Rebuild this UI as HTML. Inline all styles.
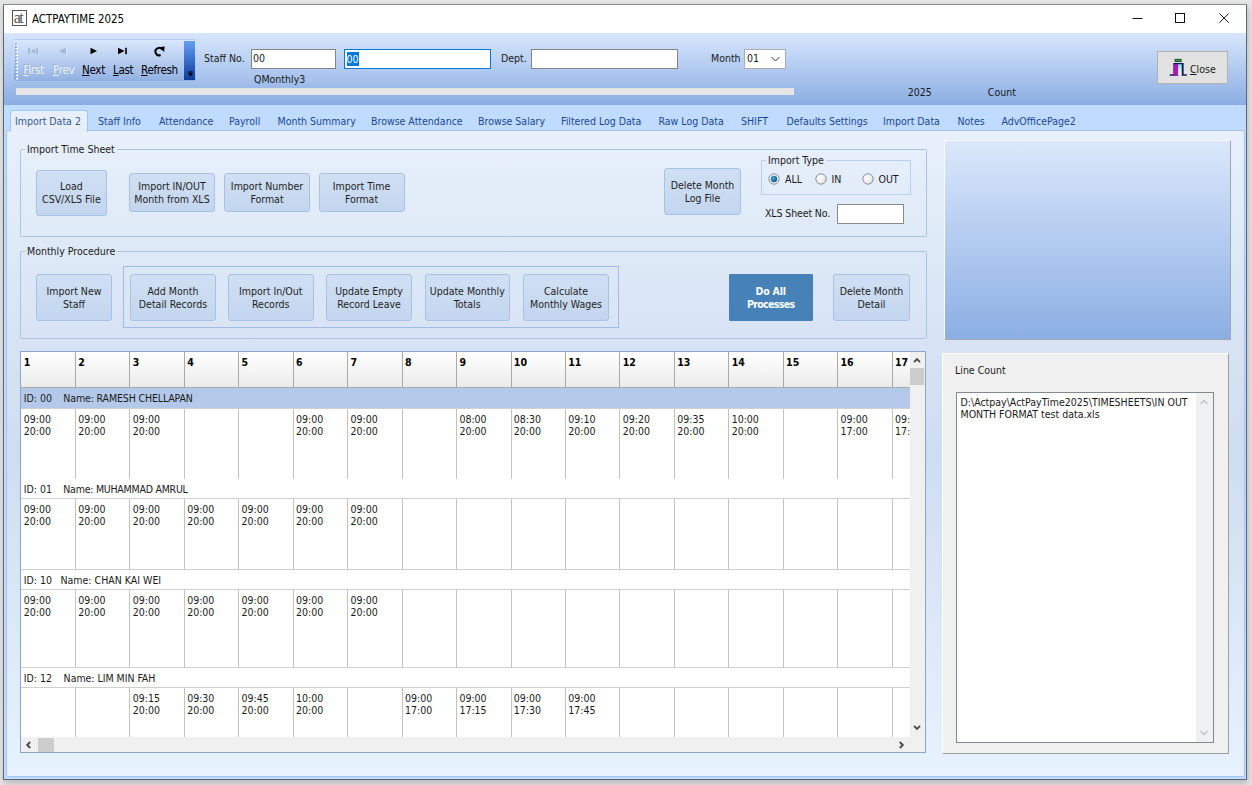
<!DOCTYPE html>
<html lang="en"><head><meta charset="utf-8"><title>ACTPAYTIME 2025</title>
<style>
*{box-sizing:border-box;margin:0;padding:0}
html,body{width:1252px;height:785px;overflow:hidden}
body{background:#e6e6e6;font-family:"DejaVu Sans Condensed","DejaVu Sans","Liberation Sans",sans-serif;font-size:10.5px;color:#1a1a1a;position:relative;line-height:12.5px}
.abs,.abs *{position:absolute}
div,span,svg{position:absolute;white-space:pre}
#win{left:3px;top:4px;width:1244px;height:776px;background:#fff;border:1px solid #5b6676;border-top-color:#8e8e8e;box-shadow:1px 3px 7px rgba(0,0,0,.22)}
#title{left:4px;top:5px;width:1242px;height:28px;background:#fff}
#hdr{left:4px;top:33px;width:1242px;height:72px;background:linear-gradient(#d7e6fb 0%,#bdd3f4 35%,#a2bfeb 70%,#8badE3 100%)}
#strip{left:4px;top:105px;width:1242px;height:674px;background:#bfdbff}
#page{left:6px;top:130px;width:1238.5px;height:647px;background:linear-gradient(#e7f0fb 0%,#cfddf1 50%,#e7f2fe 100%);border:1px solid #a6c5ee;border-radius:3px}
  .tab{top:111.2px;height:21px;color:#1c4890;line-height:21px}
.gb{border:1px solid #aec3df;border-radius:1.5px}
.gbl{background:linear-gradient(to bottom,#e7f0fb 130px,#cfddf1 453px,#e7f2fe 777px) fixed;padding:0 2px;height:13px;line-height:13px}
.btn{background:linear-gradient(#d0e0f4,#c3d6ef);border:1px solid #a8c2e3;border-radius:3px;text-align:center;color:#1e1e1e;display:flex;align-items:center;justify-content:center;line-height:13px;white-space:pre}
.inp{background:#fff;border:1px solid #848484}
.lbl{height:13px;line-height:13px}
.cell{line-height:12.4px}
</style></head>
<body>
<div id="win"></div><div id="title"></div><div id="hdr"></div><div id="strip"></div><div id="page"></div>
<div style="left:12px;top:10px;width:15px;height:16px;border:1px solid #555;background:#fff"></div>
<span style="left:13.8px;top:9.5px;font-family:'Liberation Serif',serif;font-size:16px;line-height:16px;color:#555;letter-spacing:-1.6px">at</span>
<span style="left:32px;top:12px;font-size:11.4px;line-height:14px;color:#000">ACTPAYTIME 2025</span>
<svg style="left:1120px;top:5px" width="126" height="28" viewBox="0 0 126 28"><g stroke="#111" stroke-width="1" fill="none"><path d="M12.5 13.5h10"/><rect x="55.5" y="8.5" width="9" height="9"/><path d="M99.5 8.5l9.2 9.2M108.7 8.5l-9.2 9.2"/></g></svg>
<div style="left:11.5px;top:39px;width:184px;height:42px;border-radius:3px;border-top:1px solid #b4caed;border-left:1px solid #c3d5f2;background:linear-gradient(#d9e7fa 0%,#c4d8f5 30%,#a5c0ea 75%,#8fb0e3 100%)"></div>
<div style="left:184px;top:41px;width:11px;height:39px;background:linear-gradient(#659df0 0%,#3c72d0 45%,#0e3c98 100%)"></div>
<svg style="left:186.5px;top:71px" width="7" height="6" viewBox="0 0 7 6"><path d="M1.5 1h4" stroke="#000" stroke-width="1.2"/><path d="M0.8 2.3h5.4L3.5 5.4z" fill="#000"/></svg>
<svg style="left:14.5px;top:43px" width="4" height="38" viewBox="0 0 4 38"><rect x="1" y="1.0" width="2" height="2" fill="#fff"/><rect x="0.2" y="0.2" width="1.5" height="1.5" fill="#6c8cc0"/><rect x="1" y="4.3" width="2" height="2" fill="#fff"/><rect x="0.2" y="3.6" width="1.5" height="1.5" fill="#6c8cc0"/><rect x="1" y="7.7" width="2" height="2" fill="#fff"/><rect x="0.2" y="6.9" width="1.5" height="1.5" fill="#6c8cc0"/><rect x="1" y="11.1" width="2" height="2" fill="#fff"/><rect x="0.2" y="10.2" width="1.5" height="1.5" fill="#6c8cc0"/><rect x="1" y="14.4" width="2" height="2" fill="#fff"/><rect x="0.2" y="13.6" width="1.5" height="1.5" fill="#6c8cc0"/><rect x="1" y="17.8" width="2" height="2" fill="#fff"/><rect x="0.2" y="16.9" width="1.5" height="1.5" fill="#6c8cc0"/><rect x="1" y="21.1" width="2" height="2" fill="#fff"/><rect x="0.2" y="20.3" width="1.5" height="1.5" fill="#6c8cc0"/><rect x="1" y="24.4" width="2" height="2" fill="#fff"/><rect x="0.2" y="23.6" width="1.5" height="1.5" fill="#6c8cc0"/><rect x="1" y="27.8" width="2" height="2" fill="#fff"/><rect x="0.2" y="27.0" width="1.5" height="1.5" fill="#6c8cc0"/><rect x="1" y="31.2" width="2" height="2" fill="#fff"/><rect x="0.2" y="30.4" width="1.5" height="1.5" fill="#6c8cc0"/><rect x="1" y="34.5" width="2" height="2" fill="#fff"/><rect x="0.2" y="33.7" width="1.5" height="1.5" fill="#6c8cc0"/></svg>
<svg style="left:26px;top:46px" width="14" height="10" viewBox="0 0 14 10"><path d="M3 2v6M11 2v6" stroke="#8fa6cc" stroke-width="1.2"/><path d="M9 2.5v5L5 5z" fill="#9fb3d4"/></svg>
<svg style="left:57px;top:46px" width="12" height="10" viewBox="0 0 12 10"><path d="M9 1.5v7L1.8 5z" fill="#a6b8d6"/><path d="M9.4 2v6.5" stroke="#e4ecf8" stroke-width=".8"/></svg>
<svg style="left:88px;top:46px" width="12" height="10" viewBox="0 0 12 10"><path d="M2.5 1.8v6.4L9 5z" fill="#000"/></svg>
<svg style="left:116px;top:46px" width="14" height="10" viewBox="0 0 14 10"><path d="M2 1.8v6.4L8.5 5z" fill="#000"/><path d="M10 1.8v6.4" stroke="#000" stroke-width="1.6"/></svg>
<svg style="left:153px;top:45px" width="13" height="13" viewBox="0 0 13 13"><path d="M7.6 10A3.7 3.7 0 1 1 9.3 4.6" fill="none" stroke="#000" stroke-width="2"/><path d="M6 2.6L11.6 1.2 11.2 7z" fill="#000"/></svg>
<span style="left:23.5px;top:62.5px;font-size:11.6px;letter-spacing:-0.35px;line-height:14px;color:#fff;text-shadow:-1px -1px 0 #9db2d6;color:#eef3fb"><u>F</u>irst</span>
<span style="left:53px;top:62.5px;font-size:11.6px;letter-spacing:-0.35px;line-height:14px;color:#fff;text-shadow:-1px -1px 0 #9db2d6;color:#eef3fb"><u>P</u>rev</span>
<span style="left:82px;top:62.5px;font-size:11.6px;letter-spacing:-0.35px;line-height:14px;color:#000"><u>N</u>ext</span>
<span style="left:113px;top:62.5px;font-size:11.6px;letter-spacing:-0.35px;line-height:14px;color:#000"><u>L</u>ast</span>
<span style="left:141px;top:62.5px;font-size:11.6px;letter-spacing:-0.35px;line-height:14px;color:#000"><u>R</u>efresh</span>
<span class="lbl" style="left:204px;top:52px">Staff No.</span>
<div class="inp" style="left:251px;top:49px;width:85px;height:20px"></div><span class="lbl" style="left:253px;top:52.2px">00</span>
<div class="inp" style="left:344px;top:49px;width:147px;height:20px;border-color:#0078d7"></div><span class="lbl" style="left:346.5px;top:52px;height:14px;line-height:14px;background:#0078d7;color:#fff">00</span>
<span class="lbl" style="left:254px;top:73px">QMonthly3</span>
<span class="lbl" style="left:501px;top:52px">Dept.</span>
<div class="inp" style="left:531px;top:49px;width:147px;height:20px"></div>
<span class="lbl" style="left:711px;top:52px">Month</span>
<div class="inp" style="left:744px;top:49px;width:42px;height:20px;border-color:#adadad"></div><span class="lbl" style="left:747px;top:52px">01</span>
<svg style="left:770px;top:55px" width="11" height="8" viewBox="0 0 11 8"><path d="M1.5 2l4 4 4-4" fill="none" stroke="#333" stroke-width="1"/></svg>
<div style="left:16px;top:88px;width:778px;height:7px;background:#e6e6e6"></div>
<span class="lbl" style="left:907.8px;top:86px">2025</span>
<span class="lbl" style="left:987.8px;top:86px">Count</span>
<div style="left:1157px;top:51px;width:71px;height:32.5px;background:#e1e1e1;border:1px solid #b2b2b2"></div>
<svg style="left:1168px;top:58px" width="20" height="19" viewBox="0 0 20 19"><defs><linearGradient id="cg" x1="0" y1="0" x2="0" y2="1"><stop offset="0" stop-color="#6ee8ee"/><stop offset=".55" stop-color="#c8f6f8"/><stop offset="1" stop-color="#fff"/></linearGradient></defs><rect x="7.1" y="1.3" width="6" height="2.2" fill="#35a045" stroke="#1b4a20" stroke-width=".9"/><path d="M1.8 17h17" stroke="#1a1a5a" stroke-width="1.5"/><rect x="5.4" y="5" width="10.2" height="12" fill="#12124e"/><rect x="5.8" y="6.2" width="4.3" height="11.5" fill="#b414b4"/><rect x="10.1" y="6.2" width="3.6" height="11.5" fill="url(#cg)"/></svg>
<span class="lbl" style="left:1190px;top:62.5px"><u>C</u>lose</span>
<div style="left:10px;top:110px;width:78px;height:22px;background:#e6effb;border:1px solid #a6c5ee;border-bottom:none;border-radius:3px 3px 0 0"></div>
<span class="tab" style="left:15px;color:#3a5a8f">Import Data 2</span>
<span class="tab" style="left:98px">Staff Info</span>
<span class="tab" style="left:159px">Attendance</span>
<span class="tab" style="left:229px">Payroll</span>
<span class="tab" style="left:277.5px">Month Summary</span>
<span class="tab" style="left:371px">Browse Attendance</span>
<span class="tab" style="left:478px">Browse Salary</span>
<span class="tab" style="left:561px">Filtered Log Data</span>
<span class="tab" style="left:658.5px">Raw Log Data</span>
<span class="tab" style="left:741px">SHIFT</span>
<span class="tab" style="left:786.5px">Defaults Settings</span>
<span class="tab" style="left:883px">Import Data</span>
<span class="tab" style="left:957.5px">Notes</span>
<span class="tab" style="left:1001.5px">AdvOfficePage2</span>
<div class="gb" style="left:19.5px;top:149px;width:907px;height:87.5px"></div>
<span class="gbl" style="left:25px;top:143px">Import Time Sheet</span>
<div class="gb" style="left:19.5px;top:250.5px;width:907px;height:88.2px"></div>
<span class="gbl" style="left:25px;top:244.5px">Monthly Procedure</span>
<div class="btn" style="left:35.8px;top:170.2px;width:71.2px;height:46.3px;">Load
CSV/XLS File</div>
<div class="btn" style="left:129px;top:173px;width:86px;height:39px;">Import IN/OUT
Month from XLS</div>
<div class="btn" style="left:224px;top:173px;width:86px;height:39px;">Import Number
Format</div>
<div class="btn" style="left:318.5px;top:173px;width:86px;height:39px;">Import Time
Format</div>
<div class="btn" style="left:664px;top:167.8px;width:77px;height:47.2px;padding-top:1px">Delete Month
Log File</div>
<div class="gb" style="left:761px;top:159.5px;width:150px;height:35.5px;border-color:#b9d0ee;border-radius:0"></div>
<span class="gbl" style="left:766px;top:154px">Import Type</span>
<svg width="0" height="0" style="left:0;top:0"><defs><radialGradient id="ru" cx=".4" cy=".4" r=".7"><stop offset="0" stop-color="#fff"/><stop offset=".6" stop-color="#ececec"/><stop offset="1" stop-color="#c9c9c9"/></radialGradient><radialGradient id="rc" cx=".5" cy=".5" r=".6"><stop offset="0" stop-color="#fff"/><stop offset="1" stop-color="#dfe9f5"/></radialGradient><radialGradient id="rd" cx=".4" cy=".35" r=".7"><stop offset="0" stop-color="#48a8d0"/><stop offset="1" stop-color="#0c4f86"/></radialGradient></defs></svg>
<svg style="left:768px;top:173px" width="12" height="12" viewBox="0 0 12 12"><circle cx="6" cy="6" r="5.2" fill="url(#rc)" stroke="#8e949c" stroke-width="1"/><circle cx="6" cy="6" r="3.2" fill="url(#rd)"/></svg>
<span class="lbl" style="left:785px;top:172.6px">ALL</span>
<svg style="left:815px;top:173px" width="12" height="12" viewBox="0 0 12 12"><circle cx="6" cy="6" r="5.2" fill="url(#ru)" stroke="#8e949c" stroke-width="1"/></svg>
<span class="lbl" style="left:831.5px;top:172.6px">IN</span>
<svg style="left:862px;top:173px" width="12" height="12" viewBox="0 0 12 12"><circle cx="6" cy="6" r="5.2" fill="url(#ru)" stroke="#8e949c" stroke-width="1"/></svg>
<span class="lbl" style="left:878.5px;top:172.6px">OUT</span>
<span class="lbl" style="left:765px;top:207px;letter-spacing:-0.12px">XLS Sheet No.</span>
<div class="inp" style="left:837px;top:204px;width:66.8px;height:20px;border-color:#8a8a8a"></div>
<div class="btn" style="left:36px;top:273.8px;width:76px;height:47px;padding-top:2px;">Import New
Staff</div>
<div class="gb" style="left:123px;top:266px;width:495.5px;height:62px;border-color:#9dbde6;border-radius:0"></div>
<div class="btn" style="left:130px;top:273.8px;width:86px;height:47px;padding-top:2px;">Add Month
Detail Records</div>
<div class="btn" style="left:228px;top:273.8px;width:85.5px;height:47px;padding-top:2px;">Import In/Out
Records</div>
<div class="btn" style="left:326px;top:273.8px;width:86px;height:47px;padding-top:2px;">Update Empty
Record Leave</div>
<div class="btn" style="left:424.5px;top:273.8px;width:85.5px;height:47px;padding-top:2px;">Update Monthly
Totals</div>
<div class="btn" style="left:523px;top:273.8px;width:86px;height:47px;padding-top:2px;">Calculate
Monthly Wages</div>
<div class="btn" style="left:728.6px;top:273.8px;width:84.2px;height:47px;padding-top:2px;background:#4682b8;border-color:#4682b8;color:#fff;font-weight:bold;border-radius:1px"><span style="position:static;display:block"><span style="position:static;letter-spacing:-.2px">Do All</span>
<span style="position:static;letter-spacing:-.65px">Processes</span></span></div>
<div class="btn" style="left:833.4px;top:273.8px;width:76.2px;height:47px;padding-top:2px;">Delete Month
Detail</div>
<div style="left:944px;top:140px;width:287px;height:199.6px;background:linear-gradient(#dbe8fb 0%,#bfd4f4 35%,#a3c0eb 70%,#8baee3 100%);border-right:1px solid #a2a6ad;border-bottom:1px solid #a2a6ad;border-top:1px solid #f6f9fe;border-left:1px solid #f6f9fe"></div>
<div style="left:942px;top:352.6px;width:287px;height:401.4px;background:#f0f0f0;border-right:1px solid #a0a0a0;border-bottom:1px solid #a0a0a0;border-top:1px solid #fff;border-left:1px solid #fff"></div>
<span class="lbl" style="left:955px;top:364px">Line Count</span>
<div class="inp" style="left:955.5px;top:392px;width:258px;height:351px;border-color:#828790"></div>
<span style="left:960.5px;top:395.5px;line-height:12.5px">D:\Actpay\ActPayTime2025\TIMESHEETS\IN OUT
MONTH FORMAT test data.xls</span>
<div style="left:1195.5px;top:393px;width:17px;height:349px;background:#f0f0f0"></div>
<svg style="left:1199px;top:399px" width="10" height="7" viewBox="0 0 10 7"><path d="M1.5 5l3.5-3.5L8.5 5" fill="none" stroke="#c4c4c4" stroke-width="1.3"/></svg>
<svg style="left:1199px;top:729px" width="10" height="7" viewBox="0 0 10 7"><path d="M1.5 2l3.5 3.5L8.5 2" fill="none" stroke="#c4c4c4" stroke-width="1.3"/></svg>
<div style="left:20px;top:350.5px;width:906px;height:402px;background:#fff;border:1px solid #8aa5c8;overflow:hidden" id="grid">
<div style="left:0;top:0;width:889px;height:36.5px;background:linear-gradient(#fff 0%,#f8f8f8 40%,#eaeaea 100%);border-bottom:1px solid #a9a9a9"></div><span style="left:2.80px;top:4px;font-weight:bold;color:#000;line-height:13px;font-size:10.5px">1</span><span style="left:57.25px;top:4px;font-weight:bold;color:#000;line-height:13px;font-size:10.5px">2</span><div style="left:53.95px;top:0;width:1px;height:37px;background:#a9a9a9"></div><span style="left:111.70px;top:4px;font-weight:bold;color:#000;line-height:13px;font-size:10.5px">3</span><div style="left:108.40px;top:0;width:1px;height:37px;background:#a9a9a9"></div><span style="left:166.15px;top:4px;font-weight:bold;color:#000;line-height:13px;font-size:10.5px">4</span><div style="left:162.85px;top:0;width:1px;height:37px;background:#a9a9a9"></div><span style="left:220.60px;top:4px;font-weight:bold;color:#000;line-height:13px;font-size:10.5px">5</span><div style="left:217.30px;top:0;width:1px;height:37px;background:#a9a9a9"></div><span style="left:275.05px;top:4px;font-weight:bold;color:#000;line-height:13px;font-size:10.5px">6</span><div style="left:271.75px;top:0;width:1px;height:37px;background:#a9a9a9"></div><span style="left:329.50px;top:4px;font-weight:bold;color:#000;line-height:13px;font-size:10.5px">7</span><div style="left:326.20px;top:0;width:1px;height:37px;background:#a9a9a9"></div><span style="left:383.95px;top:4px;font-weight:bold;color:#000;line-height:13px;font-size:10.5px">8</span><div style="left:380.65px;top:0;width:1px;height:37px;background:#a9a9a9"></div><span style="left:438.40px;top:4px;font-weight:bold;color:#000;line-height:13px;font-size:10.5px">9</span><div style="left:435.10px;top:0;width:1px;height:37px;background:#a9a9a9"></div><span style="left:492.85px;top:4px;font-weight:bold;color:#000;line-height:13px;font-size:10.5px">10</span><div style="left:489.55px;top:0;width:1px;height:37px;background:#a9a9a9"></div><span style="left:547.30px;top:4px;font-weight:bold;color:#000;line-height:13px;font-size:10.5px">11</span><div style="left:544.00px;top:0;width:1px;height:37px;background:#a9a9a9"></div><span style="left:601.75px;top:4px;font-weight:bold;color:#000;line-height:13px;font-size:10.5px">12</span><div style="left:598.45px;top:0;width:1px;height:37px;background:#a9a9a9"></div><span style="left:656.20px;top:4px;font-weight:bold;color:#000;line-height:13px;font-size:10.5px">13</span><div style="left:652.90px;top:0;width:1px;height:37px;background:#a9a9a9"></div><span style="left:710.65px;top:4px;font-weight:bold;color:#000;line-height:13px;font-size:10.5px">14</span><div style="left:707.35px;top:0;width:1px;height:37px;background:#a9a9a9"></div><span style="left:765.10px;top:4px;font-weight:bold;color:#000;line-height:13px;font-size:10.5px">15</span><div style="left:761.80px;top:0;width:1px;height:37px;background:#a9a9a9"></div><span style="left:819.55px;top:4px;font-weight:bold;color:#000;line-height:13px;font-size:10.5px">16</span><div style="left:816.25px;top:0;width:1px;height:37px;background:#a9a9a9"></div><span style="left:874.00px;top:4px;font-weight:bold;color:#000;line-height:13px;font-size:10.5px">17</span><div style="left:870.70px;top:0;width:1px;height:37px;background:#a9a9a9"></div><div style="left:0;top:36.5px;width:889px;height:21.0px;background:#b4c9e9;border-bottom:1px solid #d0d0d0"></div><span style="left:2.7px;top:40.5px;line-height:13px">ID: 00</span><span style="left:42.3px;top:40.5px;line-height:13px;letter-spacing:-0.13px">Name: RAMESH CHELLAPAN</span><div style="left:0;top:127.0px;width:889px;height:1px;background:#d0d0d0"></div><div style="left:53.95px;top:57.5px;width:1px;height:70.0px;background:#c3c3c3"></div><div style="left:108.40px;top:57.5px;width:1px;height:70.0px;background:#c3c3c3"></div><div style="left:162.85px;top:57.5px;width:1px;height:70.0px;background:#c3c3c3"></div><div style="left:217.30px;top:57.5px;width:1px;height:70.0px;background:#c3c3c3"></div><div style="left:271.75px;top:57.5px;width:1px;height:70.0px;background:#c3c3c3"></div><div style="left:326.20px;top:57.5px;width:1px;height:70.0px;background:#c3c3c3"></div><div style="left:380.65px;top:57.5px;width:1px;height:70.0px;background:#c3c3c3"></div><div style="left:435.10px;top:57.5px;width:1px;height:70.0px;background:#c3c3c3"></div><div style="left:489.55px;top:57.5px;width:1px;height:70.0px;background:#c3c3c3"></div><div style="left:544.00px;top:57.5px;width:1px;height:70.0px;background:#c3c3c3"></div><div style="left:598.45px;top:57.5px;width:1px;height:70.0px;background:#c3c3c3"></div><div style="left:652.90px;top:57.5px;width:1px;height:70.0px;background:#c3c3c3"></div><div style="left:707.35px;top:57.5px;width:1px;height:70.0px;background:#c3c3c3"></div><div style="left:761.80px;top:57.5px;width:1px;height:70.0px;background:#c3c3c3"></div><div style="left:816.25px;top:57.5px;width:1px;height:70.0px;background:#c3c3c3"></div><div style="left:870.70px;top:57.5px;width:1px;height:70.0px;background:#c3c3c3"></div><span class="cell" style="left:2.80px;top:61.0px">09:00</span><span class="cell" style="left:2.80px;top:73.0px">20:00</span><span class="cell" style="left:57.25px;top:61.0px">09:00</span><span class="cell" style="left:57.25px;top:73.0px">20:00</span><span class="cell" style="left:111.70px;top:61.0px">09:00</span><span class="cell" style="left:111.70px;top:73.0px">20:00</span><span class="cell" style="left:275.05px;top:61.0px">09:00</span><span class="cell" style="left:275.05px;top:73.0px">20:00</span><span class="cell" style="left:329.50px;top:61.0px">09:00</span><span class="cell" style="left:329.50px;top:73.0px">20:00</span><span class="cell" style="left:438.40px;top:61.0px">08:00</span><span class="cell" style="left:438.40px;top:73.0px">20:00</span><span class="cell" style="left:492.85px;top:61.0px">08:30</span><span class="cell" style="left:492.85px;top:73.0px">20:00</span><span class="cell" style="left:547.30px;top:61.0px">09:10</span><span class="cell" style="left:547.30px;top:73.0px">20:00</span><span class="cell" style="left:601.75px;top:61.0px">09:20</span><span class="cell" style="left:601.75px;top:73.0px">20:00</span><span class="cell" style="left:656.20px;top:61.0px">09:35</span><span class="cell" style="left:656.20px;top:73.0px">20:00</span><span class="cell" style="left:710.65px;top:61.0px">10:00</span><span class="cell" style="left:710.65px;top:73.0px">20:00</span><span class="cell" style="left:819.55px;top:61.0px">09:00</span><span class="cell" style="left:819.55px;top:73.0px">17:00</span><span class="cell" style="left:874.00px;top:61.0px">09:</span><span class="cell" style="left:874.00px;top:73.0px">17:</span><div style="left:0;top:127.5px;width:889px;height:20.0px;background:#fff;border-bottom:1px solid #d0d0d0"></div><span style="left:2.7px;top:131.5px;line-height:13px">ID: 01</span><span style="left:42.3px;top:131.5px;line-height:13px;letter-spacing:-0.24px">Name: MUHAMMAD AMRUL</span><div style="left:0;top:217.5px;width:889px;height:1px;background:#d0d0d0"></div><div style="left:53.95px;top:147.5px;width:1px;height:70.5px;background:#c3c3c3"></div><div style="left:108.40px;top:147.5px;width:1px;height:70.5px;background:#c3c3c3"></div><div style="left:162.85px;top:147.5px;width:1px;height:70.5px;background:#c3c3c3"></div><div style="left:217.30px;top:147.5px;width:1px;height:70.5px;background:#c3c3c3"></div><div style="left:271.75px;top:147.5px;width:1px;height:70.5px;background:#c3c3c3"></div><div style="left:326.20px;top:147.5px;width:1px;height:70.5px;background:#c3c3c3"></div><div style="left:380.65px;top:147.5px;width:1px;height:70.5px;background:#c3c3c3"></div><div style="left:435.10px;top:147.5px;width:1px;height:70.5px;background:#c3c3c3"></div><div style="left:489.55px;top:147.5px;width:1px;height:70.5px;background:#c3c3c3"></div><div style="left:544.00px;top:147.5px;width:1px;height:70.5px;background:#c3c3c3"></div><div style="left:598.45px;top:147.5px;width:1px;height:70.5px;background:#c3c3c3"></div><div style="left:652.90px;top:147.5px;width:1px;height:70.5px;background:#c3c3c3"></div><div style="left:707.35px;top:147.5px;width:1px;height:70.5px;background:#c3c3c3"></div><div style="left:761.80px;top:147.5px;width:1px;height:70.5px;background:#c3c3c3"></div><div style="left:816.25px;top:147.5px;width:1px;height:70.5px;background:#c3c3c3"></div><div style="left:870.70px;top:147.5px;width:1px;height:70.5px;background:#c3c3c3"></div><span class="cell" style="left:2.80px;top:151.0px">09:00</span><span class="cell" style="left:2.80px;top:163.0px">20:00</span><span class="cell" style="left:57.25px;top:151.0px">09:00</span><span class="cell" style="left:57.25px;top:163.0px">20:00</span><span class="cell" style="left:111.70px;top:151.0px">09:00</span><span class="cell" style="left:111.70px;top:163.0px">20:00</span><span class="cell" style="left:166.15px;top:151.0px">09:00</span><span class="cell" style="left:166.15px;top:163.0px">20:00</span><span class="cell" style="left:220.60px;top:151.0px">09:00</span><span class="cell" style="left:220.60px;top:163.0px">20:00</span><span class="cell" style="left:275.05px;top:151.0px">09:00</span><span class="cell" style="left:275.05px;top:163.0px">20:00</span><span class="cell" style="left:329.50px;top:151.0px">09:00</span><span class="cell" style="left:329.50px;top:163.0px">20:00</span><div style="left:0;top:218.0px;width:889px;height:20.0px;background:#fff;border-bottom:1px solid #d0d0d0"></div><span style="left:2.7px;top:222.0px;line-height:13px">ID: 10</span><span style="left:39.5px;top:222.0px;line-height:13px;letter-spacing:0px">Name: CHAN KAI WEI</span><div style="left:0;top:315.5px;width:889px;height:1px;background:#d0d0d0"></div><div style="left:53.95px;top:238.0px;width:1px;height:78.0px;background:#c3c3c3"></div><div style="left:108.40px;top:238.0px;width:1px;height:78.0px;background:#c3c3c3"></div><div style="left:162.85px;top:238.0px;width:1px;height:78.0px;background:#c3c3c3"></div><div style="left:217.30px;top:238.0px;width:1px;height:78.0px;background:#c3c3c3"></div><div style="left:271.75px;top:238.0px;width:1px;height:78.0px;background:#c3c3c3"></div><div style="left:326.20px;top:238.0px;width:1px;height:78.0px;background:#c3c3c3"></div><div style="left:380.65px;top:238.0px;width:1px;height:78.0px;background:#c3c3c3"></div><div style="left:435.10px;top:238.0px;width:1px;height:78.0px;background:#c3c3c3"></div><div style="left:489.55px;top:238.0px;width:1px;height:78.0px;background:#c3c3c3"></div><div style="left:544.00px;top:238.0px;width:1px;height:78.0px;background:#c3c3c3"></div><div style="left:598.45px;top:238.0px;width:1px;height:78.0px;background:#c3c3c3"></div><div style="left:652.90px;top:238.0px;width:1px;height:78.0px;background:#c3c3c3"></div><div style="left:707.35px;top:238.0px;width:1px;height:78.0px;background:#c3c3c3"></div><div style="left:761.80px;top:238.0px;width:1px;height:78.0px;background:#c3c3c3"></div><div style="left:816.25px;top:238.0px;width:1px;height:78.0px;background:#c3c3c3"></div><div style="left:870.70px;top:238.0px;width:1px;height:78.0px;background:#c3c3c3"></div><span class="cell" style="left:2.80px;top:242.5px">09:00</span><span class="cell" style="left:2.80px;top:254.5px">20:00</span><span class="cell" style="left:57.25px;top:242.5px">09:00</span><span class="cell" style="left:57.25px;top:254.5px">20:00</span><span class="cell" style="left:111.70px;top:242.5px">09:00</span><span class="cell" style="left:111.70px;top:254.5px">20:00</span><span class="cell" style="left:166.15px;top:242.5px">09:00</span><span class="cell" style="left:166.15px;top:254.5px">20:00</span><span class="cell" style="left:220.60px;top:242.5px">09:00</span><span class="cell" style="left:220.60px;top:254.5px">20:00</span><span class="cell" style="left:275.05px;top:242.5px">09:00</span><span class="cell" style="left:275.05px;top:254.5px">20:00</span><span class="cell" style="left:329.50px;top:242.5px">09:00</span><span class="cell" style="left:329.50px;top:254.5px">20:00</span><div style="left:0;top:316.0px;width:889px;height:20.0px;background:#fff;border-bottom:1px solid #d0d0d0"></div><span style="left:2.7px;top:320.0px;line-height:13px">ID: 12</span><span style="left:42.6px;top:320.0px;line-height:13px;letter-spacing:-0.03px">Name: LIM MIN FAH</span><div style="left:0;top:408.0px;width:889px;height:1px;background:#d0d0d0"></div><div style="left:53.95px;top:336.0px;width:1px;height:72.5px;background:#c3c3c3"></div><div style="left:108.40px;top:336.0px;width:1px;height:72.5px;background:#c3c3c3"></div><div style="left:162.85px;top:336.0px;width:1px;height:72.5px;background:#c3c3c3"></div><div style="left:217.30px;top:336.0px;width:1px;height:72.5px;background:#c3c3c3"></div><div style="left:271.75px;top:336.0px;width:1px;height:72.5px;background:#c3c3c3"></div><div style="left:326.20px;top:336.0px;width:1px;height:72.5px;background:#c3c3c3"></div><div style="left:380.65px;top:336.0px;width:1px;height:72.5px;background:#c3c3c3"></div><div style="left:435.10px;top:336.0px;width:1px;height:72.5px;background:#c3c3c3"></div><div style="left:489.55px;top:336.0px;width:1px;height:72.5px;background:#c3c3c3"></div><div style="left:544.00px;top:336.0px;width:1px;height:72.5px;background:#c3c3c3"></div><div style="left:598.45px;top:336.0px;width:1px;height:72.5px;background:#c3c3c3"></div><div style="left:652.90px;top:336.0px;width:1px;height:72.5px;background:#c3c3c3"></div><div style="left:707.35px;top:336.0px;width:1px;height:72.5px;background:#c3c3c3"></div><div style="left:761.80px;top:336.0px;width:1px;height:72.5px;background:#c3c3c3"></div><div style="left:816.25px;top:336.0px;width:1px;height:72.5px;background:#c3c3c3"></div><div style="left:870.70px;top:336.0px;width:1px;height:72.5px;background:#c3c3c3"></div><span class="cell" style="left:111.70px;top:340.5px">09:15</span><span class="cell" style="left:111.70px;top:352.5px">20:00</span><span class="cell" style="left:166.15px;top:340.5px">09:30</span><span class="cell" style="left:166.15px;top:352.5px">20:00</span><span class="cell" style="left:220.60px;top:340.5px">09:45</span><span class="cell" style="left:220.60px;top:352.5px">20:00</span><span class="cell" style="left:275.05px;top:340.5px">10:00</span><span class="cell" style="left:275.05px;top:352.5px">20:00</span><span class="cell" style="left:383.95px;top:340.5px">09:00</span><span class="cell" style="left:383.95px;top:352.5px">17:00</span><span class="cell" style="left:438.40px;top:340.5px">09:00</span><span class="cell" style="left:438.40px;top:352.5px">17:15</span><span class="cell" style="left:492.85px;top:340.5px">09:00</span><span class="cell" style="left:492.85px;top:352.5px">17:30</span><span class="cell" style="left:547.30px;top:340.5px">09:00</span><span class="cell" style="left:547.30px;top:352.5px">17:45</span><div style="left:889px;top:0;width:15px;height:386px;background:#f0f0f0"></div><div style="left:0;top:385.5px;width:904px;height:15px;background:#f0f0f0"></div><div style="left:889px;top:16.5px;width:14px;height:16.5px;background:#cdcdcd"></div><div style="left:16.5px;top:386px;width:16px;height:14px;background:#cdcdcd"></div><svg style="left:891px;top:5px" width="10" height="7" viewBox="0 0 10 7"><path d="M2 5.2l3-3 3 3" fill="none" stroke="#4a4a4a" stroke-width="1.9"/></svg><svg style="left:891px;top:372.5px" width="10" height="7" viewBox="0 0 10 7"><path d="M2 1.8l3 3 3-3" fill="none" stroke="#4a4a4a" stroke-width="1.9"/></svg><svg style="left:4px;top:388px" width="7" height="10" viewBox="0 0 7 10"><path d="M5.2 2L2.2 5l3 3" fill="none" stroke="#4a4a4a" stroke-width="1.9"/></svg><svg style="left:877px;top:388px" width="7" height="10" viewBox="0 0 7 10"><path d="M1.8 2L4.8 5l-3 3" fill="none" stroke="#4a4a4a" stroke-width="1.9"/></svg>
</div>
</body></html>
